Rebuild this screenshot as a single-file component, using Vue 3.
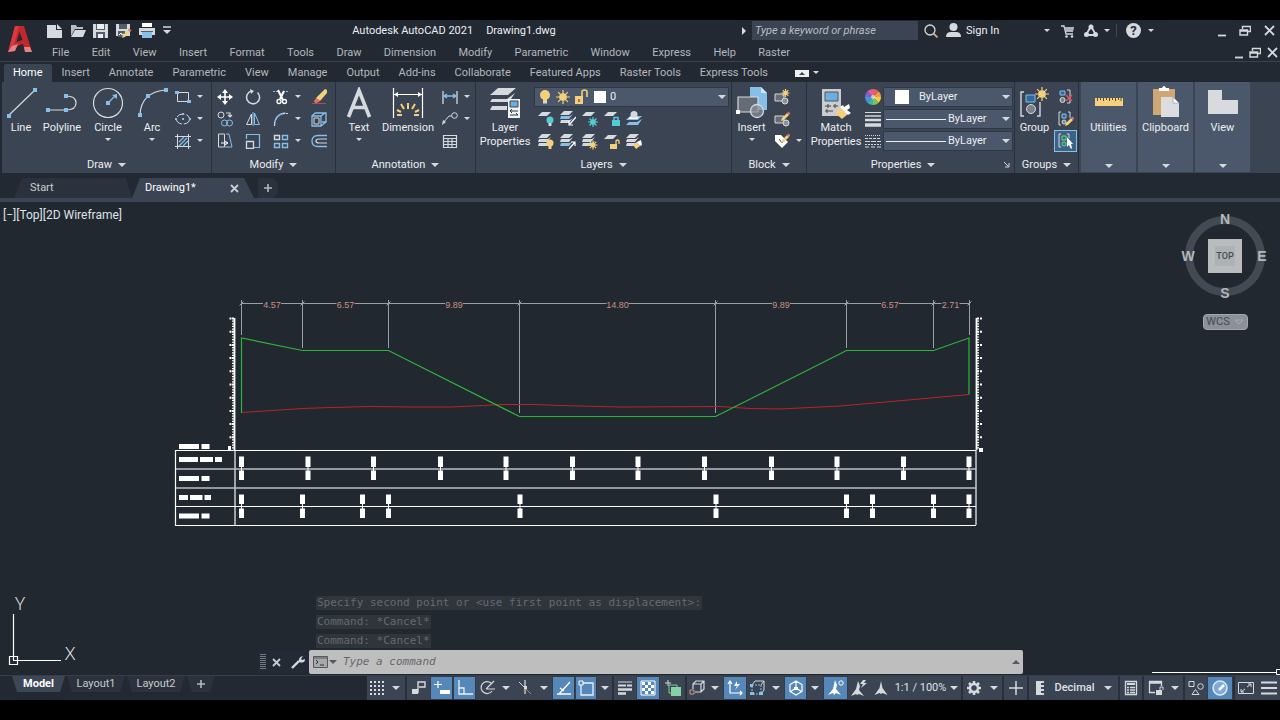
<script setup>
import { h } from 'vue'

const W = '#d6d9de'
const B = '#86bfea'
const Y = '#f5cf7c'
const sheet = (x, y, c = W) => `<path d="M${x + 4} ${y}h9l-4 4h-9z" fill="${c}"/>`
const sheets = (x, y, c1 = W, c2 = W, c3 = W) =>
  sheet(x, y, c1) +
  `<path d="M${x + 1} ${y + 5}h9l3-2-4 5h-9z" fill="${c2}"/><path d="M${x + 1} ${y + 9}h9l3-2-4 5h-9z" fill="${c3}"/>`
const star = (x, y, r, c = Y) =>
  `<path d="M${x} ${y - r}v${2 * r}M${x - r} ${y}h${2 * r}M${x - r * 0.7} ${y - r * 0.7}l${r * 1.4} ${r * 1.4}M${x - r * 0.7} ${y + r * 0.7}l${r * 1.4} ${-r * 1.4}" stroke="${c}" stroke-width="1.2"/><circle cx="${x}" cy="${y}" r="${r * 0.55}" fill="${c}"/>`
const pencil = (x, y) =>
  `<path d="M${x} ${y}l1-3 5-5 2 2-5 5z" fill="${Y}"/><path d="M${x + 6} ${y - 8}l1.500-1.500 2 2-1.500 1.500z" fill="#e0706a"/>`

const icons = {
  logo: [26, 30, `<path d="M8 2h9l8 26h-7l-2-8-6 2-2 5-7 1z" fill="#c2272e"/><path d="M8 2h4L7 21l-6 7z" fill="#d93a3f"/><path d="M12.500 8l-3 10 6-2z" fill="#222933"/><path d="M1 28l4-6 6-2-3 7zM17 23h6l2 5h-7z" fill="#e08583"/>`],
  new: [16, 16, `<path d="M0 2h9v5h6v8H0z" fill="${W}"/><path d="M10 1l5 5h-5z" fill="${W}"/>`],
  open: [16, 16, `<path d="M1 13V2h5l1 2h6v2H5z" fill="#b9bdc3"/><path d="M5 7h11l-3 7H1z" fill="${W}"/>`],
  save: [16, 16, `<path d="M0 1h15v14H0z" fill="${W}"/><path d="M3 1h9v6H3zM3 9h9v6H3z" fill="#555d68"/><path d="M4 1h7v5H4zM5 11h5v4H5z" fill="#eceef0"/>`],
  saveas: [16, 16, `<path d="M0 1h14v12H0z" fill="${W}"/><path d="M3 1h8v5H3zM2 8h7v6H2z" fill="#555d68"/><path d="M3 12l2-2 1 2 2-1" stroke="#fff" fill="none"/>${pencil(6, 15)}`],
  print: [16, 16, `<path d="M3 0h10v4H3z" fill="#fff"/><path d="M0 5h16v7H0z" fill="${W}"/><path d="M3 9h10v6H3z" fill="${B}"/><path d="M2 8h12v1H2z" fill="#555d68"/>`],
  qat: [10, 10, `<path d="M1 1h8" stroke="${W}" stroke-width="1.500"/><path d="M1 4h8L5 8z" fill="${W}"/>`],
  tri: [8, 5, `<path d="M0 0h8L4 4z" fill="${W}"/>`],
  trismall: [6, 4, `<path d="M0 0h6L3 3z" fill="${W}"/>`],
  right: [5, 8, `<path d="M0 0v8l4-4z" fill="${W}"/>`],
  search: [14, 14, `<circle cx="6" cy="6" r="5" fill="none" stroke="${W}" stroke-width="1.300"/><path d="M9.500 9.500l4 4" stroke="#c9b07a" stroke-width="1.800"/>`],
  user: [15, 15, `<circle cx="7.500" cy="4" r="4" fill="${W}"/><path d="M0 14q0-5 5-5h5q5 0 5 5z" fill="${W}"/>`],
  cart: [14, 14, `<path d="M0 2h3l2 8h7M12 3l-1 5" fill="none" stroke="${W}" stroke-width="1.300"/><path d="M3 3h10l-1 5H5z" fill="#aeb3ba"/><circle cx="5.500" cy="12.500" r="1.300" fill="${W}"/><circle cx="11" cy="12.500" r="1.300" fill="${W}"/>`],
  share: [14, 13, `<path d="M7 2L2 11h10z" fill="none" stroke="${W}" stroke-width="1.800"/><circle cx="7" cy="3" r="2.500" fill="${W}"/><circle cx="2.500" cy="10.500" r="2.500" fill="${W}"/><circle cx="11.500" cy="10.500" r="2.500" fill="${W}"/>`],
  min: [8, 12, `<path d="M0 10.500h8" stroke="${W}" stroke-width="1.800"/>`],
  restore: [12, 12, `<path d="M3.500 4V1.500h8v5H9" fill="none" stroke="${W}" stroke-width="1.400"/><path d="M1 5h7.500v5H1zM1 6h7" fill="none" stroke="${W}" stroke-width="1.400"/>`],
  close: [11, 11, `<path d="M1 1l9 9M10 1l-9 9" stroke="${W}" stroke-width="1.800"/>`],
  line: [32, 32, `<path d="M3 29L30 3" stroke="${W}" stroke-width="1.200"/><path d="M2 27h4v4H2zM28 1h4v4h-4z" fill="${B}"/>`],
  polyline: [32, 32, `<path d="M2 23h18M20 9q10 0 10 7t-10 7" fill="none" stroke="${W}" stroke-width="1.200"/><path d="M0 21h4v4H0zM18 21h4v4h-4zM18 7h4v4h-4z" fill="${B}"/>`],
  circle: [32, 32, `<circle cx="16" cy="16" r="14.500" fill="none" stroke="${W}" stroke-width="1.200"/><path d="M16 16l7-7" stroke="${B}" stroke-width="1.300"/><path d="M14 14h4v4h-4zM25 7v5l-5-4z" fill="${B}"/>`],
  arc: [32, 32, `<path d="M4 28Q5 5 30 3" fill="none" stroke="${W}" stroke-width="1.200"/><path d="M2 26h4v4H2zM28 1h4v4h-4zM10 7h4v4h-4z" fill="${B}"/>`],
  rect: [16, 16, `<path d="M2.500 3.500h11v9h-11z" fill="none" stroke="${W}"/><path d="M0 2h4v3H0zM12 11h4v3h-4z" fill="${B}"/>`],
  ellipse: [16, 16, `<ellipse cx="8" cy="8" rx="6.500" ry="5" fill="none" stroke="${W}" stroke-dasharray="8 2"/><path d="M0 7h2v2H0zM7 7h2v2H7zM14 7h2v2h-2zM7 2h2v2H7z" fill="${B}"/>`],
  hatch: [16, 16, `<path d="M0 3.500h16M0 13.500h16M2.500 1v15M13.500 1v15" stroke="${W}"/><path d="M4 9l5-5M4 13l8-8M8 13l5-5" stroke="${B}" stroke-width="1.300"/>`],
  move: [16, 16, `<path d="M8 2v12M2 8h12" stroke="#fff" stroke-width="1.600"/><path d="M8 0l3 4H5zM8 16l3-4H5zM0 8l4-3v6zM16 8l-4-3v6z" fill="#fff"/>`],
  rotate: [16, 16, `<path d="M12.500 3.500a6.500 6.500 0 1 1-6-1.500" fill="none" stroke="${W}" stroke-width="1.500"/><path d="M5 0l4 2-3 3z" fill="${W}"/>`],
  trim: [16, 16, `<path d="M0 2.500h6M10 2.500h6" stroke="${B}" stroke-dasharray="2 1"/><path d="M5 1l5 10M11 2L7 10" stroke="#fff" stroke-width="2"/><circle cx="6" cy="12.500" r="2" fill="none" stroke="#fff" stroke-width="1.300"/><circle cx="11.500" cy="12.500" r="2" fill="none" stroke="#fff" stroke-width="1.300"/>`],
  erase: [16, 16, `<path d="M5 9l9-9 2 1v3l-7 8z" fill="${Y}"/><path d="M5 9l4 3-3 2q-3 0-3-2z" fill="#e0706a"/><path d="M1 14.500h14" stroke="#b04d54"/>`],
  copy: [16, 16, `<circle cx="4" cy="4" r="3" fill="none" stroke="${W}"/><path d="M9 2h4v3M11 4l2 2 2-2" fill="none" stroke="${W}" stroke-width="1.200"/><circle cx="7.500" cy="12" r="3" fill="none" stroke="${B}"/><circle cx="12.500" cy="12" r="3" fill="none" stroke="${B}"/>`],
  mirror: [16, 16, `<path d="M6.500 3v10.500h-5z" fill="none" stroke="${W}"/><path d="M9.500 2v11.500h5z" fill="none" stroke="${B}"/><path d="M8 1v14" stroke="${B}"/>`],
  fillet: [16, 16, `<path d="M1.500 15q0-12 11-13" fill="none" stroke="${B}" stroke-width="1.300"/><path d="M1.500 15v-4M10 2.500h6" stroke="${W}" stroke-dasharray="2 1"/>`],
  box: [16, 16, `<path d="M1 5h9v10H1zM4 2h11v9H11M1 5l3-3M10 5l4-3M10 15l5-4" fill="none" stroke="${B}" stroke-width="1.300"/><path d="M3 7h5v6H3z" fill="none" stroke="${W}"/>`],
  stretch: [16, 16, `<path d="M1.500 1h6v13h-6z" fill="none" stroke="${W}"/><path d="M9 1h3l3 13H8" fill="none" stroke="${B}"/><path d="M4 10h6M8 8l3 2-3 2" stroke="#fff" fill="none"/>`],
  scale: [16, 16, `<path d="M1.500 6V1.500h13v13H9" fill="none" stroke="${B}" stroke-width="1.200"/><path d="M1.500 8.500h7v7h-7z" fill="none" stroke="${W}" stroke-width="1.300"/>`],
  array: [16, 16, `<path d="M1.500 2.500h5v4h-5z" fill="none" stroke="${W}" stroke-width="1.400"/><path d="M9.500 2.500h5v4h-5zM1.500 10.500h5v4h-5zM9.500 10.500h5v4h-5z" fill="none" stroke="${B}" stroke-width="1.400"/>`],
  offset: [16, 16, `<path d="M16 2.500H7Q1 2.500 1 8t6 5.500h9" fill="none" stroke="${B}" stroke-width="1.300"/><path d="M16 6H8Q5 6 5 8t3 2h8" fill="none" stroke="${W}" stroke-width="1.200"/>`],
  text: [32, 32, `<path d="M5.500 30L16 3.500 26.500 30M9 20.500h14" fill="none" stroke="${W}" stroke-width="3.600"/>`],
  dim: [32, 32, `<path d="M1.500 1v30M30.500 1v30M2 7.500h28" stroke="#fff" stroke-width="1.200"/><path d="M2 7.500l4-2.500v5zM30 7.500l-4-2.500v5z" fill="#fff"/><path d="M16 16v6M9 17l3 5M23 17l-3 5M5 23l4 2M27 23l-4 2M5 28h5M22 28h5" stroke="${Y}" stroke-width="2"/>`],
  dimlin: [16, 16, `<path d="M1 2v13M15 2v13" stroke="${W}" stroke-width="1.300"/><path d="M2 7h12M5 5L2 7l3 2M11 5l3 2-3 2" fill="none" stroke="${B}" stroke-width="1.300"/>`],
  leader: [16, 16, `<circle cx="12.500" cy="4.500" r="2.800" fill="none" stroke="${W}"/><path d="M10 5H7L1 12" fill="none" stroke="${W}"/><path d="M0 14l1-5 3 2z" fill="${W}"/>`],
  table: [16, 16, `<path d="M1.500 2.500h13v12h-13zM2 5.500h12M2 8.500h12M2 11.500h12M6 5v9M10 5v9" fill="none" stroke="${W}" stroke-width="1.200"/>`],
  layerprop: [32, 32, `<path d="M9 1h18l-8 7H1zM3 12h15l8-6-6 9H1zM3 19h15v4H1z" fill="${W}"/><path d="M19 12h12v19H19z" fill="#f0f2f4"/><path d="M21 14h8v6h-8z" fill="#69aee4" stroke="#444"/><path d="M21 24h8M23 22l-2 2 2 2M21 28h8M27 26l2 2" stroke="#333" fill="none"/>`],
  bulb: [14, 16, `<circle cx="7" cy="6" r="5" fill="${Y}"/><path d="M5 10h4v3H5z" fill="${Y}"/><path d="M5 13.500h4" stroke="${W}" stroke-width="2"/>`],
  sun: [14, 16, star(7, 8, 7)],
  unlock: [14, 16, `<path d="M1 7h8v8H1z" fill="${Y}"/><path d="M8 7V3q0-2 2.500-2T13 3v5" fill="none" stroke="${Y}" stroke-width="1.600"/><path d="M5 10v3" stroke="#7a6230" stroke-width="1.500"/>`],
  lBulb: [16, 16, sheet(0, 1) + `<circle cx="12" cy="9" r="3.500" fill="#55cbd4"/><path d="M10.500 12h3v3h-3z" fill="${W}"/>`],
  lPick: [16, 16, sheets(0, 0, W, B, W) + '<path d="M16 6l-6 7M9 10v4h4" stroke="#fff" stroke-width="1.200" fill="none"/>'],
  lFreeze: [16, 16, sheet(0, 1) + star(11, 11, 5, '#55cbd4')],
  lLock: [16, 16, sheet(0, 1) + `<path d="M8 9h8v6H8z" fill="#55cbd4"/><path d="M10 9V6.500h4V9" fill="none" stroke="#55cbd4" stroke-width="1.500"/>`],
  lState: [16, 16, `<path d="M4 5h12l-4 4H0zM3 11h8l5-3-4 6H0z" fill="${B}"/><path d="M4 6h9l-2 2H2z" fill="#fff"/><circle cx="8" cy="3.500" r="3.500" fill="${W}"/>`],
  lOn: [16, 16, sheets(0, 0) + `<circle cx="12" cy="9" r="3.500" fill="${Y}"/><path d="M10.500 12h3v3h-3z" fill="${Y}"/>`],
  lCur: [16, 16, sheets(0, 0, W, W, B) + '<path d="M9 15l6-7M11 8h4v4" stroke="#fff" stroke-width="1.200" fill="none"/>'],
  lThaw: [16, 16, sheets(0, 0) + star(11, 11, 4.500)],
  lUnlock: [16, 16, sheet(0, 1) + `<path d="M6 10h7v5H6z" fill="${Y}"/><path d="M12 10V7q1.500-2 3 0v3" fill="none" stroke="${Y}" stroke-width="1.300"/>`],
  lMatch: [16, 16, sheets(0, 0) + `<path d="M7 11l4-3 3 4-4 3z" fill="${Y}"/><path d="M11 8l4-2 1 5-2 1z" fill="#fff"/>`],
  insert: [32, 32, `<path d="M14 0h11l6 6v17H14z" fill="${B}"/><path d="M25 0v6h6" fill="#cfe6f8"/><path d="M2 10h20v15H2z" fill="#656c78" stroke="${W}" stroke-width="1.200"/><circle cx="21" cy="24" r="6.500" fill="#8a919b" fill-opacity=".7" stroke="${W}" stroke-width="1.300"/><path d="M0 23h4v4H0z" fill="#fff"/>`],
  bNew: [16, 16, `<path d="M1 5h9v7H1z" fill="#656c78" stroke="${W}"/><circle cx="11" cy="12" r="3" fill="#8a919b" stroke="${W}"/>${star(11.500, 4, 4)}`],
  bEdit: [16, 16, `<path d="M1 5h9v7H1z" fill="#656c78" stroke="${W}"/><circle cx="12" cy="12" r="3" fill="#8a919b" stroke="${W}"/>${pencil(7, 10)}`],
  bAttr: [16, 16, `<path d="M1 2h6l7 7-6 6-7-7z" fill="#fff"/><path d="M5 6l3 4 2-3" stroke="#444" fill="none"/>${pencil(7, 10)}`],
  match: [32, 32, `<path d="M2 2h19v27H2z" fill="#c9ccd0"/><path d="M5 5h13v9H5z" fill="#69aee4" stroke="#555"/><path d="M5 19h6M8 17v4M13 19h5M15 17v4M5 24h8M7 22v4" stroke="#444"/><path d="M15 26l7-6 6 7-6 5z" fill="${Y}"/><path d="M20 20l3-2 1 2 5-3 1 4-3 2 4 3-3 2z" fill="#fff"/>`],
  wheel: [16, 16, ['#e85f56', '#f2994a', '#f2d14a', '#7cc55a', '#3fb3a5', '#4594dd', '#7a63c9', '#d95fa5'].map((c, i) => `<path transform="rotate(${i * 45} 8 8)" d="M8 8V0q3.300 0 5.660 2.340z" fill="${c}"/>`).join('') + '<circle cx="8" cy="8" r="2" fill="#fff" fill-opacity=".6"/>'],
  lweight: [16, 16, `<path d="M0 1.500h16" stroke="${W}"/><path d="M0 5h16" stroke="${W}" stroke-width="1.500"/><path d="M0 9h16" stroke="${W}" stroke-width="2.500"/><path d="M0 14h16" stroke="${W}" stroke-width="3.500"/>`],
  ltype: [16, 16, `<path d="M0 2.500h16" stroke="${W}" stroke-dasharray="1 1"/><path d="M0 5.500h16" stroke="${W}" stroke-dasharray="3 1"/><path d="M0 8.500h16" stroke="${W}" stroke-dasharray="5 1"/><path d="M0 11.500h16" stroke="${W}" stroke-dasharray="2 1"/><path d="M0 14h16" stroke="${W}" stroke-dasharray="4 2"/>`],
  group: [32, 32, `<path d="M5 5H2v24h3M18 29h3V15" fill="none" stroke="${W}" stroke-width="1.400"/><path d="M7 8h9v7H7z" fill="#35689a" stroke="${B}"/><circle cx="12" cy="22" r="4.500" fill="#7b828c" stroke="${W}"/>${star(23, 7, 7)}`],
  gUn: [16, 16, `<path d="M2 2h5v4H2z" fill="#35689a" stroke="${B}"/><circle cx="4.500" cy="11" r="2.500" fill="#7b828c" stroke="${W}"/><path d="M9 1h3v13H9" fill="none" stroke="${W}"/><path d="M8 6l6 6M14 6l-6 6" stroke="#e0505a" stroke-width="1.600"/>`],
  gEdit: [16, 16, `<path d="M3 1H1v13h2M10 1h2v6" fill="none" stroke="${W}"/><path d="M4 3h4v4H4z" fill="#35689a" stroke="${B}"/><circle cx="6" cy="11" r="2" fill="#7b828c" stroke="${W}"/>${pencil(7, 15)}`],
  gSel: [16, 16, `<path d="M3 1H1v13h2M9 1h2v4" fill="none" stroke="${W}"/><path d="M4 3h4v4H4z" fill="#2b7a55" stroke="#6fd6a0"/><circle cx="6" cy="11" r="2" fill="#2b7a55" stroke="#6fd6a0"/><path d="M9 4v10l2-2 2 4 1-1-1-4h2z" fill="#fff"/>`],
  ruler: [28, 10, `<path d="M0 1h28v8H0z" fill="${Y}"/><path d="M2.500 1v3M5.500 1v2M8.500 1v3M11.500 1v2M14.500 1v3M17.500 1v2M20.500 1v3M23.500 1v2M26 1v3" stroke="#59502f"/>`],
  clip: [26, 32, `<path d="M0 3h22v26H0z" fill="#cfa772"/><path d="M6 5V2h3q2-4 4 0h3v3z" fill="#fff"/><path d="M8 11h12l6 6v14H8z" fill="#dcdde0"/><path d="M20 11v6h6z" fill="#fff" stroke="#8a8d91" stroke-width=".6"/>`],
  view: [32, 26, '<path d="M1 1h14v10h16v14H1z" fill="#d9dade"/>'],
  sGrid: [16, 16, [2, 6, 10, 14].map(x => [2, 6, 10, 14].map(y => `<path d="M${x - 1} ${y - 1}h2v2h-2z" fill="${W}"/>`).join('')).join('')],
  sSnap: [16, 16, `<path d="M1 9h6v5H1z" fill="${W}"/><path d="M7 13V2h7v5H8" fill="none" stroke="${W}" stroke-width="1.400"/>`],
  sDyn: [16, 16, '<path d="M4 1v7M0 4.500h8" stroke="#fff" stroke-width="1.200"/><path d="M6 10h10v4H6z" fill="#fff"/>'],
  sOrtho: [16, 16, '<path d="M2 0v14h14M2 8h5v6" fill="none" stroke="#e8f2fb" stroke-width="1.300"/>'],
  sPolar: [16, 16, `<path d="M12 3a6 6 0 1 0 1 8M7 9l8-8M7 9h9" fill="none" stroke="${W}" stroke-width="1.200"/>`],
  sIso: [16, 16, `<path d="M8 0v14" stroke="#fff"/><path d="M2 2l12 12" stroke="#b07f7c"/><path d="M2 2l5 5" stroke="${W}"/><path d="M7 6h3v3H7z" fill="${W}"/>`],
  sTrack: [16, 16, '<path d="M1 14h14M3 14L14 2M4 8l4 3" stroke="#fff" stroke-width="1.300"/>'],
  sOsnap: [16, 16, '<path d="M3 3h12v12H3z" fill="none" stroke="#e8f2fb" stroke-width="1.300"/><path d="M1 1h4v4H1z" fill="#5687b9" stroke="#fff"/>'],
  sLw: [16, 16, `<path d="M1 2h14" stroke="${W}"/><path d="M1 5.500h8M10 5.500h5" stroke="${W}" stroke-width="2"/><path d="M1 9.500h14M1 13.500h8" stroke="${W}" stroke-width="2.500"/>`],
  sTrans: [16, 16, '<path d="M1 1h14v14H1z" fill="none" stroke="#fff"/>' + [0, 1, 2, 3].map(i => [0, 1, 2, 3].map(j => (i + j) % 2 ? '' : `<path d="M${2 + i * 3} ${2 + j * 3}h3v3h-3z" fill="#fff"/>`).join('')).join('')],
  sCycle: [16, 16, `<path d="M3 0v6M0 3h6" stroke="${W}"/><path d="M4 5h8v8H4z" fill="none" stroke="#7fce9f"/><path d="M6 7h10v9H6z" fill="#85d3a3"/>`],
  s3d: [16, 16, `<path d="M4 9V4l3-3h8v8l-3 3H6M4 4h8v8M12 4l3-3" fill="none" stroke="${W}" stroke-width="1.200"/><path d="M1 10h4v4H1z" fill="none" stroke="#d19a86"/>`],
  sUcs: [16, 16, '<path d="M3 2v11h12M1 4l2-3 2 3M13 11l2 2-2 2" fill="none" stroke="#fff" stroke-width="1.200"/><path d="M10 1L7 6h3l-2 4 5-6h-3z" fill="#fff"/>'],
  sFilter: [16, 16, `<path d="M2 5h9v9H2z" fill="none" stroke="${B}" stroke-dasharray="2 1"/><path d="M2 5l3-4h9l-3 4M14 1v9l-3 4" fill="none" stroke="${W}"/><path d="M0 12h4v3H0zM9 12h4v3H9zM0 4h3v3H0z" fill="${B}"/>`],
  sGizmo: [16, 16, '<path d="M8 1l6 3.500v7L8 15l-6-3.500v-7zM8 1v7l6 4M8 8l-6 4" fill="none" stroke="#fff" stroke-width="1.200"/><path d="M6 7h4v3H6z" fill="#fff"/>'],
  sA1: [16, 16, '<path d="M7 0l2 5-1 4 5 6-5-2-2 2-1-2-5 2 5-6z" fill="#fff"/><circle cx="13" cy="3" r="2.200" fill="none" stroke="#fff"/>'],
  sA2: [16, 16, `<path d="M7 1l2 5-1 4 5 6-5-2-2 1-1-1-5 2 5-7z" fill="${W}"/><path d="M12 0l-3 4h3l-2 4 6-5h-3l2-3z" fill="${W}"/>`],
  sA3: [16, 16, `<path d="M8 1l1.500 7 5 7-5-2-1.500 1-1.500-1-5 2 5-7z" fill="${W}"/>`],
  gear: [16, 16, `<path d="M8 1v14M1 8h14M3 3l10 10M13 3L3 13" stroke="${W}" stroke-width="2.600"/><circle cx="8" cy="8" r="4" fill="#3b4453" stroke="${W}" stroke-width="2.500"/>`],
  plus: [16, 16, `<path d="M8 1v14M1 8h14" stroke="${W}" stroke-width="1.500"/>`],
  addtab: [10, 10, '<path d="M5 1v8M1 5h8" stroke="#b4b8be" stroke-width="1.600"/>'],
  tabclose: [9, 9, '<path d="M1 1l7 7M8 1L1 8" stroke="#c9ccd1" stroke-width="1.800"/>'],
  sRuler: [10, 16, `<path d="M1 1h8v2H6v2h3v2H6v2h3v2H6v2h3v2H1z" fill="${W}"/>`],
  sQuick: [14, 16, `<path d="M1.500 1.500h11v13h-11z" fill="none" stroke="${W}" stroke-width="1.300"/><path d="M3 3h8v2H3z" fill="${W}"/><path d="M3 7.500h2M6 7.500h5M3 10h2M6 10h5M3 12.500h2M6 12.500h5" stroke="${W}" stroke-width="1.300"/>`],
  sLock: [16, 16, `<path d="M7 12.500H1.500v-11h12V6M1 3h12" fill="none" stroke="${W}" stroke-width="1.300"/><path d="M8 10h6v5H8z" fill="${W}"/><path d="M12 10V7h3v3" fill="none" stroke="${W}"/>`],
  sIso2: [16, 16, `<path d="M1 1.500h5v5H1zM7.500 9.500l3.500 5H4z" fill="none" stroke="${W}"/><circle cx="12.500" cy="6.500" r="2.800" fill="none" stroke="${W}"/>`],
  sHw: [16, 16, '<circle cx="8" cy="8" r="7" fill="#a8d0f0" fill-opacity=".5" stroke="#d5eafa" stroke-width="1.500"/><path d="M7 10l5-5" stroke="#fff" stroke-width="2.500"/>'],
  sClean: [16, 16, `<path d="M.500 2.500h15v11H.500z" fill="none" stroke="${W}"/><path d="M9 7l4-3M10 4h3v3M7 9l-4 3M3 9v3h3" fill="none" stroke="${W}"/>`],
  sMenu: [16, 16, `<path d="M0 2.500h16M0 8h16M0 13.500h16" stroke="${W}" stroke-width="1.800"/>`],
  grip: [6, 16, [1, 3, 5].map(x => `<path d="M${x} 0v16" stroke="#c4c7ca" stroke-dasharray="1 1"/>`).join('')],
  wrench: [14, 14, `<path d="M1 13l7-7" stroke="${W}" stroke-width="2.400"/><path d="M8 7q-1-5 4-6l-2 3 1 1 3-1q0 5-6 3z" fill="${W}"/>`],
  prompt: [16, 12, '<path d="M.500 .500h14v11H.500z" fill="#a7a8aa" stroke="#55585c"/><path d="M.500 2h14" stroke="#55585c"/><path d="M3 4l2 2-2 2M7 9h4" fill="none" stroke="#333"/>'],
  launcher: [6, 6, `<path d="M0 0l4 4M5 1v4H1" fill="none" stroke="${W}"/>`]
}

const Icon = ({ n }) => {
  const [w, ht, body] = icons[n]
  return h('svg', { width: w, height: ht, viewBox: `0 0 ${w} ${ht}`, 'aria-hidden': 'true', innerHTML: body })
}
Icon.props = ['n']

const quick = ['new', 'open', 'save', 'saveas', 'print', 'qat']
const menus = ['File', 'Edit', 'View', 'Insert', 'Format', 'Tools', 'Draw', 'Dimension', 'Modify', 'Parametric', 'Window', 'Express', 'Help', 'Raster']
const tabs = ['Home', 'Insert', 'Annotate', 'Parametric', 'View', 'Manage', 'Output', 'Add-ins', 'Collaborate', 'Featured Apps', 'Raster Tools', 'Express Tools']
const drawBig = [['Line', 'line', 0], ['Polyline', 'polyline', 0], ['Circle', 'circle', 1], ['Arc', 'arc', 1]]
const modify = [['move'], ['rotate'], ['trim', 1], ['erase'], ['copy'], ['mirror'], ['fillet', 1], ['box'], ['stretch'], ['scale'], ['array', 1], ['offset']]
const layerTools = ['lBulb', 'lPick', 'lFreeze', 'lLock', 'lState', 'lOn', 'lCur', 'lThaw', 'lUnlock', 'lMatch']
const collapsed = [['Utilities', 'ruler'], ['Clipboard', 'clip'], ['View', 'view']]

// [icon, width, active, starts a new group]
const status = [
  ['sGrid', 20], ['tri', 18], ['sSnap', 25, 0, 1], ['sDyn', 23, 1], ['sOrtho', 23, 1], ['sPolar', 22], ['tri', 16],
  ['sIso', 22], ['tri', 16], ['sTrack', 23, 1], ['sOsnap', 22, 1], ['tri', 15], ['sLw', 24, 0, 1], ['sTrans', 24, 1],
  ['sCycle', 25], ['s3d', 22, 0, 1], ['tri', 16], ['sUcs', 24, 1, 1], ['sFilter', 21], ['tri', 16], ['sGizmo', 23, 1],
  ['tri', 16], ['sA1', 25, 1, 1], ['sA2', 22], ['sA3', 22]
]
const status2 = [['gear', 24, 0, 1], ['tri', 17], ['plus', 25, 0, 1]]
const status3 = [['sQuick', 24, 0, 1], ['sLock', 25, 0, 1], ['tri', 16], ['sIso2', 24, 0, 1], ['sHw', 26, 1, 1], ['sClean', 24, 0, 1], ['sMenu', 23]]

const dimX = [241.5, 302.5, 388.5, 519.5, 715.5, 846.5, 933.5, 969.5]
const dimEnd = [335, 348, 348, 413, 413, 348, 348, 335]
const dims = ['4.57', '6.57', '9.89', '14.80', '9.89', '6.57', '2.71'].map((t, i) => {
  const c = (dimX[i] + dimX[i + 1]) / 2 - (i === 6 ? 1 : 0)
  const half = t.length > 4 ? 11 : 9
  return { t, c, a: dimX[i], b: c - half, d: c + half, e: dimX[i + 1] }
})
const majors = Array.from({ length: 10 }, (_, i) => 318.5 + i * 13.2)
const minors = Array.from({ length: 50 }, (_, i) => 318.5 + i * 2.64)
const rowA = [241.5, 308, 373.5, 440.5, 506, 572.5, 638, 704.5, 771.5, 837, 903.5, 969]
const rowB = [241.5, 302.5, 362.5, 388.5, 520, 716, 846.5, 872.5, 933.5, 969]
const labels = [[179, 444, 20], [201.5, 444, 8], [179, 457, 19], [200, 457, 13], [215, 457, 7], [179, 476, 20], [201.5, 476, 8], [179, 495, 9], [190, 495, 12.5], [204.5, 495, 6.5], [179, 513.5, 20], [201.5, 513.5, 8]]
const history = ['Specify second point or <use first point as displacement>:', 'Command: *Cancel*', 'Command: *Cancel*']
</script>

<template>
  <div class="screen">
    <div class="app">
      <header class="head">
        <button class="logo" aria-label="Application menu"><Icon n="logo" /></button>
        <div class="rows">
          <div class="titlebar">
            <div class="quick">
              <button v-for="q in quick" :key="q" :aria-label="q"><Icon :n="q" /></button>
            </div>
            <h1><span>Autodesk AutoCAD 2021</span><span>Drawing1.dwg</span></h1>
            <button class="hint" aria-label="Toggle search"><Icon n="right" /></button>
            <input class="search" type="search" aria-label="Search help" placeholder="Type a keyword or phrase">
            <button class="mag" aria-label="Search"><Icon n="search" /></button>
            <button class="sign"><Icon n="user" /><span>Sign In</span></button>
            <button class="more" aria-label="Account options"><Icon n="trismall" /></button>
            <button class="cart" aria-label="Store"><Icon n="cart" /></button>
            <button class="share" aria-label="Autodesk apps"><Icon n="share" /><Icon n="trismall" /></button>
            <button class="help" aria-label="Help"><b>?</b><Icon n="trismall" /></button>
            <div class="win">
              <button aria-label="Minimize"><Icon n="min" /></button>
              <button aria-label="Restore"><Icon n="restore" /></button>
              <button aria-label="Close"><Icon n="close" /></button>
            </div>
          </div>
          <nav class="menubar" aria-label="Menu bar">
            <div class="menus"><button v-for="m in menus" :key="m">{{ m }}</button></div>
            <div class="win doc">
              <button aria-label="Minimize drawing"><Icon n="min" /></button>
              <button aria-label="Restore drawing"><Icon n="restore" /></button>
              <button aria-label="Close drawing"><Icon n="close" /></button>
            </div>
          </nav>
        </div>
      </header>

      <nav class="tabs" aria-label="Ribbon tabs">
        <button v-for="(t, i) in tabs" :key="t" :class="{ on: i === 0 }">{{ t }}</button>
        <button class="fold" aria-label="Minimize ribbon"><i></i><Icon n="trismall" /></button>
      </nav>

      <section class="ribbon" aria-label="Home ribbon">
        <div class="panel draw">
          <div class="body">
            <button v-for="d in drawBig" :key="d[0]" class="big"><Icon :n="d[1]" /><span>{{ d[0] }}</span><Icon v-if="d[2]" n="trismall" /></button>
            <div class="stack">
              <button v-for="s in ['rect', 'ellipse', 'hatch']" :key="s" class="split" :aria-label="s"><Icon :n="s" /><Icon n="trismall" /></button>
            </div>
          </div>
          <button class="caption">Draw <Icon n="tri" /></button>
        </div>
        <div class="panel modify">
          <div class="body tools">
            <button v-for="m in modify" :key="m[0]" class="split" :aria-label="m[0]"><Icon :n="m[0]" /><Icon v-if="m[1]" n="trismall" /></button>
          </div>
          <button class="caption">Modify <Icon n="tri" /></button>
        </div>
        <div class="panel annot">
          <div class="body">
            <button class="big"><Icon n="text" /><span>Text</span><Icon n="trismall" /></button>
            <button class="big"><Icon n="dim" /><span>Dimension</span></button>
            <div class="stack">
              <button class="split" aria-label="Linear"><Icon n="dimlin" /><Icon n="trismall" /></button>
              <button class="split" aria-label="Leader"><Icon n="leader" /><Icon n="trismall" /></button>
              <button class="split" aria-label="Table"><Icon n="table" /></button>
            </div>
          </div>
          <button class="caption">Annotation <Icon n="tri" /></button>
        </div>
        <div class="panel layers">
          <div class="body">
            <button class="big"><Icon n="layerprop" /><span>Layer<br>Properties</span></button>
            <div class="layercol">
              <div class="combo layer">
                <Icon n="bulb" /><Icon n="sun" /><Icon n="unlock" /><i class="swatch"></i>
                <select aria-label="Layer"><option>0</option></select><Icon n="tri" />
              </div>
              <div class="layertools">
                <button v-for="l in layerTools" :key="l" :aria-label="l"><Icon :n="l" /></button>
              </div>
            </div>
          </div>
          <button class="caption">Layers <Icon n="tri" /></button>
        </div>
        <div class="panel block">
          <div class="body">
            <button class="big"><Icon n="insert" /><span>Insert</span><Icon n="trismall" /></button>
            <div class="stack">
              <button class="split" aria-label="Create block"><Icon n="bNew" /></button>
              <button class="split" aria-label="Edit block"><Icon n="bEdit" /></button>
              <button class="split" aria-label="Edit attributes"><Icon n="bAttr" /><Icon n="trismall" /></button>
            </div>
          </div>
          <button class="caption">Block <Icon n="tri" /></button>
        </div>
        <div class="panel props">
          <div class="body">
            <button class="big"><Icon n="match" /><span>Match<br>Properties</span></button>
            <div class="proprows">
              <div class="prop"><Icon n="wheel" /><div class="combo"><i class="swatch"></i><select aria-label="Object color"><option>ByLayer</option></select><Icon n="tri" /></div></div>
              <div class="prop"><Icon n="lweight" /><div class="combo"><i class="rule"></i><select aria-label="Lineweight"><option>ByLayer</option></select><Icon n="tri" /></div></div>
              <div class="prop"><Icon n="ltype" /><div class="combo"><i class="rule"></i><select aria-label="Linetype"><option>ByLayer</option></select><Icon n="tri" /></div></div>
            </div>
          </div>
          <div class="capline"><button class="caption">Properties <Icon n="tri" /></button><button class="launch" aria-label="Properties palette"><Icon n="launcher" /></button></div>
        </div>
        <div class="panel groups">
          <div class="body">
            <button class="big"><Icon n="group" /><span>Group</span></button>
            <div class="stack">
              <button aria-label="Ungroup"><Icon n="gUn" /></button>
              <button aria-label="Edit group"><Icon n="gEdit" /></button>
              <button aria-label="Group selection" class="sel"><Icon n="gSel" /></button>
            </div>
          </div>
          <button class="caption">Groups <Icon n="tri" /></button>
        </div>
        <button v-for="c in collapsed" :key="c[0]" class="closed"><span class="pic"><Icon :n="c[1]" /></span><span>{{ c[0] }}</span><Icon n="tri" /></button>
      </section>

      <nav class="files" aria-label="Open drawings">
        <button class="file">Start</button>
        <button class="file on"><span>Drawing1*</span><Icon n="tabclose" /></button>
        <button class="add" aria-label="New drawing"><Icon n="addtab" /></button>
      </nav>

      <main class="canvas">
        <svg class="sheet" viewBox="0 202 1280 473" preserveAspectRatio="xMidYMid meet" role="img" aria-label="Section profile drawing">
          <g stroke="#9a9fa6" fill="none">
            <path v-for="(x, i) in dimX" :key="x" :d="`M${x} 300V${dimEnd[i]}M${x - 2} 305.500l4-4`" />
            <path v-for="d in dims" :key="d.c" :d="`M${d.a} 303.500H${d.b}M${d.d} 303.500H${d.e}`" />
          </g>
          <text v-for="d in dims" :key="d.c" :x="d.c" y="307.500" class="dimtext">{{ d.t }}</text>
          <path d="M241.500 412.500L302.500 408.500 330 407.500 370 406.500 410 407 450 407 485 405.500 500 404.500 535 404.500 560 405.500 620 407 720 406.500 750 408.500 780 409 840 406 880 402.500 925 398.500 969 394.500" fill="none" stroke="#b92329" />
          <path d="M241.500 413V338L302.500 350.500H388.500L519.500 416.500H715.500L846.500 350.500H933.500L969 338V394.500" fill="none" stroke="#2fb53b" stroke-width="1.200" />
          <g stroke="#fff" fill="none">
            <path d="M234.500 318V450M976.500 318V450" stroke-width="1.800" />
            <path d="M235 450V525M976 450V525" stroke="#d5d7da" stroke-width="1.400" />
            <path v-for="y in minors" :key="y" :d="`M232 ${y}h2M977 ${y}h2`" stroke-width="1.200" />
            <path v-for="y in majors" :key="y" :d="`M229.500 ${y}h2M232 ${y}h2M977 ${y}h2M980 ${y}h2`" stroke-width="2" />
            <path d="M176 450.500H976M176 506.500H976M176 525.500H976M175.500 450V526" stroke-width="1.200" />
            <path d="M176 469H976M176 488H976" stroke="#bcbfc4" stroke-width="1.500" />
            <path v-for="x in rowA" :key="x" :d="`M${x} 466v5`" />
            <path v-for="x in rowB" :key="x" :d="`M${x} 503v6`" />
          </g>
          <g fill="#fff">
            <path v-for="x in rowA" :key="x" :d="`M${x - 2.5} 456.500h5v10.500h-5zM${x - 2.5} 470.500h5v9.500h-5z`" />
            <path v-for="x in rowB" :key="x" :d="`M${x - 2.5} 494.500h5v9.500h-5zM${x - 2.5} 508.500h5v9.500h-5z`" />
            <rect v-for="(l, i) in labels" :key="i" :x="l[0]" :y="l[1]" :width="l[2]" height="5" />
            <path d="M228 446h3v4h-3zM979 448h4v4h-4z" />
          </g>
          <path d="M1152 672.500H1276M1276.500 669.500h5v5h-5z" stroke="#fff" fill="none" />
        </svg>
        <button class="vpctl">[−][Top][2D Wireframe]</button>

        <div class="cube">
          <svg width="88" height="92" viewBox="0 0 88 92" role="img" aria-label="View cube">
            <circle cx="44" cy="46" r="36" fill="none" stroke="#434a53" stroke-width="8" />
            <path d="M27 29h34v34H27z" fill="#b9bbbd" /><path d="M34 36h20v20H34z" fill="#adb2b4" />
            <text x="44" y="14" class="dir">N</text><text x="44" y="88" class="dir">S</text>
            <text x="7" y="51" class="dir">W</text><text x="81" y="51" class="dir">E</text>
            <text x="44" y="49" class="top">TOP</text>
          </svg>
          <button class="wcs">WCS <svg width="10" height="6" viewBox="0 0 10 6"><path d="M1 1h8L5 5z" fill="none" stroke="#a9adb6" /></svg></button>
        </div>

        <svg class="ucs" width="90" height="84" viewBox="0 0 90 84" role="img" aria-label="UCS icon">
          <path d="M13.500 30V76.500H61M9.500 72.500h8v8h-8z" fill="none" stroke="#fff" stroke-width="1.200" />
          <text x="15" y="26">Y</text><text x="65" y="76">X</text>
        </svg>

        <div class="command">
          <ol><li v-for="(l, i) in history" :key="i"><span>{{ l }}</span></li></ol>
          <div class="cmdrow">
            <div class="cmdtools"><Icon n="grip" /><button aria-label="Close command line"><Icon n="tabclose" /></button><button aria-label="Customize"><Icon n="wrench" /></button></div>
            <label class="cmdline"><Icon n="prompt" /><i class="dn"></i><input type="text" aria-label="Command" placeholder="Type a command"><i class="up"></i></label>
          </div>
        </div>
      </main>

      <footer class="foot">
        <nav class="layouts" aria-label="Layouts">
          <button class="on">Model</button><button>Layout1</button><button>Layout2</button><button class="plus" aria-label="New layout"><Icon n="addtab" /></button>
        </nav>
        <div class="status">
          <button v-for="(s, i) in status" :key="i" :class="{ on: s[2], edge: s[3] }" :style="{ width: s[1] + 'px' }" :aria-label="s[0]"><Icon :n="s[0]" /></button>
          <button class="scale">1:1 / 100% <Icon n="tri" /></button>
          <button v-for="(s, i) in status2" :key="i" :class="{ edge: s[3] }" :style="{ width: s[1] + 'px' }" :aria-label="s[0]"><Icon :n="s[0]" /></button>
          <button class="units edge"><Icon n="sRuler" /><span>Decimal</span><Icon n="tri" /></button>
          <button v-for="(s, i) in status3" :key="i" :class="{ on: s[2], edge: s[3] }" :style="{ width: s[1] + 'px' }" :aria-label="s[0]"><Icon :n="s[0]" /></button>
        </div>
      </footer>
    </div>
  </div>
</template>

<style>
body { background: #000; }
</style>

<style scoped>
.screen { min-height: 100vh; box-sizing: border-box; padding: 20px 0; background: #000; display: flex; font: 11px/14px Roboto, "Noto Sans", sans-serif; color: #dfe2e6; }
.app { flex: 1; min-width: 0; display: flex; flex-direction: column; background: #222933; }
button { all: unset; box-sizing: border-box; display: flex; align-items: center; justify-content: center; white-space: nowrap; cursor: default; }
svg { flex: none; display: block; }
select, input { all: unset; box-sizing: border-box; }
.head { display: flex; border-bottom: 1px solid #3a424e; }
.logo { width: 40px; padding-top: 4px; align-items: flex-start; }
.rows { flex: 1; min-width: 0; }
.titlebar { display: flex; height: 21px; align-items: center; }
.quick { display: flex; width: 130px; gap: 7px; padding-left: 7px; box-sizing: border-box; }
.titlebar h1 { flex: 1; margin: 0; font: inherit; color: #eceef0; display: flex; justify-content: center; gap: 13px; padding-left: 2px; }
.hint { width: 16px; }
.search { width: 166px; height: 19px; background: #3b4453; padding-left: 3px; font-style: italic; }
.search::placeholder { color: #b9bdc4; }
.mag { width: 26px; }
.sign { width: 59px; gap: 5px; justify-content: flex-start; padding-left: 2px; color: #eceef0; }
.more { width: 50px; justify-content: flex-end; padding-right: 3px; }
.cart { width: 16px; margin: 0 7px; }
.share { width: 34px; gap: 6px; border-right: 1px solid #3f4753; padding-right: 6px; }
.help { width: 46px; gap: 7px; }
.help b { width: 15px; height: 15px; border-radius: 8px; background: #d6d9de; color: #222933; text-align: center; line-height: 15px; font-size: 13px; }
.win { display: flex; width: 117px; justify-content: flex-end; gap: 13px; padding-right: 5px; box-sizing: border-box; }
.menubar { display: flex; height: 20px; padding: 3px 0 0 12px; box-sizing: border-box; color: #b4b8be; align-items: center; justify-content: space-between; }
.menus { display: flex; width: 738px; justify-content: space-between; }
.win.doc { gap: 6px; padding-right: 2px; }
.tabs { display: flex; height: 20px; gap: 1px; padding: 2px 0 0 4px; box-sizing: border-box; color: #b4b8be; }
.tabs button { padding: 0 9px; }
.tabs .on { background: #3b4453; color: #fff; border-radius: 2px 2px 0 0; }
.tabs .fold { gap: 4px; margin-left: 8px; }
.fold i { width: 14px; height: 7px; background: #eceef0; display: grid; place-items: center; }
.fold i::after { content: ""; border: 3px solid transparent; border-top: 0; border-bottom-color: #444; }
.ribbon { display: flex; background: #3b4453; margin-left: 2px; color: #eceef0; min-height: 91px; }
.panel { box-sizing: border-box; border-right: 1px solid #28303b; display: flex; flex-direction: column; justify-content: space-between; padding-top: 4px; }
.body { display: flex; }
.big { flex-direction: column; justify-content: flex-start; text-align: center; padding-top: 1px; }
.big span { margin-top: 2px; }
.big span + svg { margin-top: 3px; }
.caption { gap: 6px; height: 16px; width: 100%; }
.stack { display: flex; flex-direction: column; }
.stack button, .split { height: 22px; }
.split { justify-content: flex-start; gap: 6px; }
.draw { width: 210px; }
.draw .big { width: 48px; }
.draw .big:first-child { width: 38px; }
.draw .big:nth-child(2) { width: 44px; }
.draw .big:nth-child(4) { width: 40px; }
.draw .stack { padding-left: 3px; }
.modify { width: 124px; }
.tools { display: grid; grid-template-columns: 28px 28px 38px 24px; padding-left: 5px; }
.annot { width: 140px; }
.annot .big:first-child { width: 44px; }
.annot .big:nth-child(2) { width: 54px; }
.annot .stack { padding-left: 7px; }
.annot .body { padding-left: 1px; }
.layers { width: 256px; }
.layers .big, .props .big { width: 58px; }
.layercol { flex: 1; padding: 1px 2px 0 0; }
.combo { flex: 1; display: flex; align-items: center; height: 20px; box-sizing: border-box; background: #4b586b; border: 1px solid #2f3845; padding-right: 2px; }
.combo select { flex: 1; min-width: 0; }
.combo select option { color: #000; }
.swatch { width: 14px; height: 14px; background: #fff; }
.layer { padding-left: 3px; gap: 4px; }
.layer .swatch { box-sizing: border-box; width: 12px; height: 12px; margin-left: 2px; }
.layertools { display: grid; grid-template-columns: repeat(5, 22px); justify-content: start; padding-left: 1px; }
.layertools button { height: 23px; }
.block { width: 75px; }
.block .big { width: 39px; }
.block .stack { padding-left: 3px; }
.props { width: 208px; }
.proprows { flex: 1; padding: 1px 1px 0 0; display: flex; flex-direction: column; gap: 2px; }
.prop { display: flex; align-items: center; gap: 2px; }
.prop .swatch { margin: 0 10px 0 11px; }
.rule { width: 60px; height: 1px; background: #eceef0; margin: 0 2px; }
.capline { display: flex; }
.launch { width: 16px; }
.groups { width: 64px; }
.groups .big { width: 39px; }
.groups .stack button { width: 23px; }
.groups .stack .sel { background: #3c6285; border: 1px solid #86bfea; }
.closed { flex-direction: column; width: 55px; margin: 0 0 1px 2px; background: #4b586b; justify-content: flex-start; padding-top: 1px; }
.pic { height: 38px; display: grid; place-items: center; }
.closed > span + span { flex: 1; }
.closed > svg { margin-bottom: 3px; }
.files { display: flex; height: 29px; box-sizing: border-box; padding: 5px 0 0 14px; border-bottom: 4px solid #3b4453; }
.file { width: 118px; padding: 0 12px 0 16px; justify-content: space-between; background: #2b323d; clip-path: polygon(0 100%, 8px 0, 112px 0, 100% 100%); color: #c9ccd1; }
.file.on { background: #3b4453; color: #fff; width: 122px; padding-left: 13px; padding-right: 15px; clip-path: polygon(0 100%, 8px 0, 112px 0, 100% 100%); }
.add { width: 20px; margin-left: 4px; background: #2b323d; border-radius: 2px 8px 8px 2px; }
.canvas { flex: 1; min-height: 0; position: relative; background: #212830; }
.sheet { width: 100%; height: 100%; position: absolute; inset: 0; }
.dimtext { font: 9px "Liberation Sans", sans-serif; fill: #cc9083; text-anchor: middle; }
.vpctl { position: absolute; left: 3px; top: 6px; font-size: 12px; }
.cube { position: absolute; right: 11px; top: 8px; display: grid; justify-items: center; gap: 12px; }
.dir { font: bold 14px "Liberation Sans", sans-serif; fill: #b4b7b9; text-anchor: middle; }
.top { font: 500 9px Roboto, sans-serif; fill: #474c50; text-anchor: middle; }
.wcs { width: 45px; height: 16px; border-radius: 4px; background: #8c9099; color: #444a54; gap: 4px; border: 1px solid #a1a5ac; }
.ucs { position: absolute; left: 0; bottom: 7px; }
.ucs text { font: 300 19px "Open Sans", sans-serif; fill: #eceef0; }
.command { position: absolute; left: 258px; right: 257px; bottom: 1px; font: 11px/14px "DejaVu Sans Mono", monospace; }
.command ol { list-style: none; margin: 0 0 2px; padding: 0 0 0 58px; }
.command li { height: 14px; margin-bottom: 5px; color: #656a70; }
.command li:last-child { margin-bottom: 0; }
.command li span { display: inline-block; background: #2f353b; padding: 0 1px; }
.cmdrow { display: flex; height: 24px; }
.cmdtools { width: 51px; display: flex; align-items: center; gap: 6px; padding-left: 2px; box-sizing: border-box; background: #242a35; }
.cmdtools button:last-child { margin-left: 4px; }
.cmdline { flex: 1; background: #bebebf; display: flex; align-items: center; padding: 0 3px 0 4px; border-radius: 2px; }
.cmdline input { flex: 1; font-style: italic; margin-left: 6px; }
.cmdline input::placeholder { color: #66686b; }
.dn { border: 4px solid transparent; border-top-color: #55585c; border-bottom: 0; }
.up { border: 4px solid transparent; border-bottom-color: #55585c; border-top: 0; }
.foot { display: flex; justify-content: space-between; height: 25px; border-top: 1px solid #353d48; box-sizing: border-box; }
.layouts { display: flex; height: 16px; padding-left: 12px; gap: 2px; color: #c6c9ce; }
.layouts button { width: 58px; background: #2b323d; clip-path: polygon(0 0, 100% 0, calc(100% - 5px) 100%, 5px 100%); }
.layouts .on { width: 53px; background: #3d4655; color: #fff; font-weight: bold; }
.layouts .plus { width: 28px; }
.status { display: flex; background: #3b4453; height: 24px; }
.status .edge { border-left: 2px solid #28303b; }
.status .on { background: #5687b9; border: solid #333d4a; border-width: 1px; }
.scale { width: 69px; gap: 4px; }
.units { width: 91px; gap: 10px; }
.units span { font-weight: 500; }
</style>
